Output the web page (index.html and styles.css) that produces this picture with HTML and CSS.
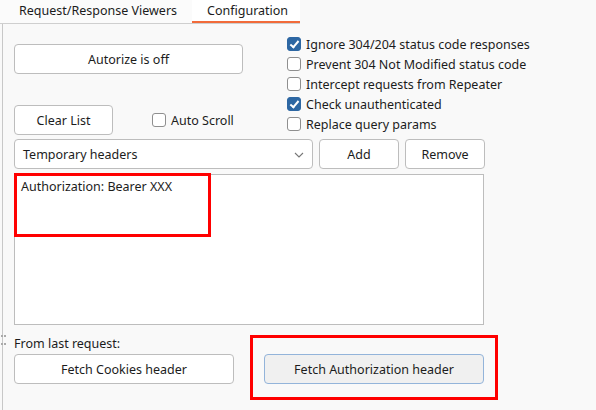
FILE: index.html
```html
<!DOCTYPE html>
<html>
<head>
<meta charset="utf-8">
<link rel="stylesheet" href="styles.css">
</head>
<body>
<div class="tabs">
  <div class="tab">Request/Response Viewers</div>
  <div class="tab active">Configuration</div>
</div>
<div class="panel">
  <span class="grip"></span>
  <div class="top">
    <div class="left">
      <button class="btn autorize">Autorize is off</button>
      <div class="clear-row">
        <button class="btn clear">Clear List</button>
        <label class="check auto"><span class="box"></span>Auto Scroll</label>
      </div>
    </div>
    <div class="options">
      <label class="check"><span class="box on"></span>Ignore 304/204 status code responses</label>
      <label class="check"><span class="box"></span>Prevent 304 Not Modified status code</label>
      <label class="check"><span class="box"></span>Intercept requests from Repeater</label>
      <label class="check"><span class="box on"></span>Check unauthenticated</label>
      <label class="check"><span class="box"></span>Replace query params</label>
    </div>
  </div>
  <div class="header-row">
    <div class="select">Temporary headers
      <svg class="chev" width="10" height="6" viewBox="0 0 10 6"><path d="M1 1 L5 5 L9 1" fill="none" stroke="#777" stroke-width="1.1"/></svg>
    </div>
    <button class="btn add">Add</button>
    <button class="btn remove">Remove</button>
  </div>
  <div class="textarea">
    <div class="line">Authorization: Bearer XXX</div>
    <div class="mark mark-text"></div>
  </div>
  <div class="from">From last request:</div>
  <div class="fetch-row">
    <button class="btn fetch">Fetch Cookies header</button>
    <div class="fetch-auth-wrap">
      <button class="btn fetch primary">Fetch Authorization header</button>
      <div class="mark mark-btn"></div>
    </div>
  </div>
</div>
</body>
</html>
```

FILE: styles.css
```css
* { box-sizing: border-box; }
html, body { margin: 0; padding: 0; }
body {
  width: 596px;
  height: 410px;
  overflow: hidden;
  background: #f9f9f9;
  font-family: "Noto Sans", "Open Sans", sans-serif;
  font-size: 12.5px;
  color: #1c1c1c;
}
.tabs {
  display: flex;
  width: 300px;
  height: 24px;
  background: #fbfbfb;
  border-bottom: 1px solid #cfcfcf;
}
.tab {
  height: 23px;
  line-height: 21px;
  padding: 0 0 0 19px;
  width: 192px;
}
.tab.active {
  width: 108px;
  padding-left: 15px;
  border-bottom: 2px solid #f26b3a;
  background: #fff;
}
.panel {
  position: relative;
  margin-left: 2px;
  border-left: 1px solid #c8c8c8;
  height: 386px;
  padding-left: 11px;
}
.grip {
  position: absolute;
  left: -2px;
  top: 311px;
  width: 3px;
  height: 10px;
  border-top: 2px dotted #aaa;
  border-bottom: 2px dotted #aaa;
}
.btn {
  font: inherit;
  color: inherit;
  background: #fff;
  border: 1px solid #bdbdbd;
  border-radius: 4px;
  height: 30px;
  padding: 0;
  display: flex;
  align-items: center;
  justify-content: center;
}
.top {
  display: flex;
}
.left {
  width: 273px;
}
.autorize {
  margin-top: 20px;
  width: 229px;
}
.clear-row {
  margin-top: 31px;
  display: flex;
  align-items: center;
}
.clear { width: 99px; }
.check {
  display: flex;
  align-items: center;
  height: 20px;
  white-space: nowrap;
}
.auto { margin-left: 39px; }
.box {
  width: 14px;
  height: 14px;
  border: 1px solid #8f8f8f;
  border-radius: 3px;
  background: #fff;
  margin-right: 5px;
  position: relative;
  flex: none;
}
.box.on {
  background: #2d67a3;
  border-color: #2d67a3;
}
.box.on::after {
  content: "";
  position: absolute;
  left: 4px;
  top: 1px;
  width: 3px;
  height: 7px;
  border: solid #fff;
  border-width: 0 2px 2px 0;
  transform: rotate(40deg);
}
.options {
  margin-top: 10px;
}
.header-row {
  margin-top: 4px;
  display: flex;
  gap: 6px;
}
.select {
  width: 299px;
  height: 30px;
  background: #fff;
  border: 1px solid #bdbdbd;
  border-radius: 4px;
  display: flex;
  align-items: center;
  padding-left: 8px;
  position: relative;
}
.chev {
  position: absolute;
  right: 8px;
  top: 12px;
}
.add { width: 80px; }
.remove { width: 80px; }
.textarea {
  position: relative;
  margin-top: 5px;
  width: 470px;
  height: 151px;
  background: #fff;
  border: 1px solid #bdbdbd;
  padding: 3px 6px;
}
.line { line-height: 17px; }
.mark {
  position: absolute;
  border: 3px solid #ff0000;
}
.mark-text {
  left: -1px;
  top: -2px;
  width: 197px;
  height: 64px;
}
.from {
  margin-top: 10px;
  height: 18px;
  line-height: 18px;
}
.fetch-row {
  display: flex;
  margin-top: 1px;
}
.fetch { width: 220px; }
.fetch-auth-wrap {
  position: relative;
  margin-left: 30px;
}
.primary {
  background: #f0f0f0;
  border-color: #93b4da;
}
.mark-btn {
  left: -14px;
  top: -19px;
  width: 248px;
  height: 65px;
}
```
